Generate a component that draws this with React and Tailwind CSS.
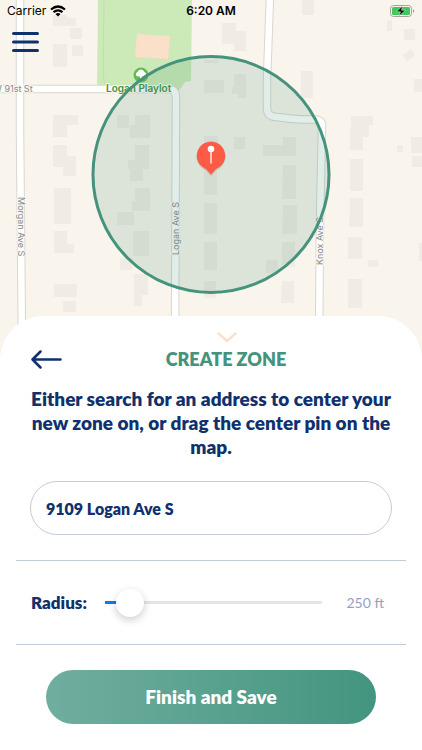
import React, { useState } from 'react';

const MIN_RADIUS = 190;
const MAX_RADIUS = 1230;

const buildings = [
  '53,15h14v3h9v8h-23z', '70,28h12v11h-12z', '53,44h14v23h-14z', '72,45h11v11h-11z',
  '53,115h25v10h-11v12h-14z', '53,145h14v11h9v20h-13v-9h-10z', '54,188h17v36h-17z',
  '54,231h13v13h7v9h-20z', '54,284h23v13h-23z', '63,301h13v11h-13z',
  '117,115h12v13h-12z', '135,115h15v23h-20v-13h5z', '135,145h14v24h-6v12h-13v-12h-2v-9h7z',
  '135,188h15v23h-18v-10h3z', '117,212h17v13h-17z', '133,231h16v25h-16z', '120,258h12v12h-12z',
  '134,274h14v21h-6v11h-8z',
  '204,60h14v3h-14z', '204,80h20v13h-20z', '204,136h14v20h-14z', '204,160h13v35h-13z',
  '204,203h13v31h-13z', '204,242h13v28h-13z', '204,281h12v17h-12z',
  '222,23h14v8h10v20h-12v-7h-12z', '302,0h12v15h-12z', '234,74h12v24h-8v-4h-6v-7h2z',
  '301,71h12v27h-12z', '234,137h11v12h-11z', '283,137h13v19h-33v-11h20z',
  '283,165h13v34h-14z', '283,205h14v29h-15z', '282,242h13v25h-13z', '266,260h12v13h-12z',
  '282,281h12v22h-13z',
  '387,21h5v10h-5z', '404,29h11v11h-11z', '403,55l8,-6l4,6l-8,6z', '414,79h8v13h-8z',
  '351,116h22v9h-4v12h-6v13h-13v-21h1z', '350,159h13v32h-13z', '350,198h13v29h-14z',
  '348,237h14v22h-14z', '368,260h10v7h-10z', '348,279h14v29h-14z',
  '397,145h6v7h-6z', '411,137h11v16h-11z', '412,156h10v11h-10z', '419,243h3v18h-3z',
];

const roads = [
  'M20 -5V130L22 345',
  'M-5 89H168Q176 89 176 97L175 345',
  'M270 -5L267 80V108Q267 117 277 117Q298 120 314 119.500Q322 119 322 126L320 220L319 345',
];

const ZoneMap = () => (
  <svg
    viewBox="0 0 422 364"
    preserveAspectRatio="xMidYMin slice"
    className="block w-full h-[364px]"
    role="img"
    aria-label="Zone map"
  >
    <rect width="422" height="364" fill="#f9f4ec" />
    <path d="M98 0H192L191 81L185 82L178 92H97z" fill="#cbeab8" />
    <path d="M104 0L103 75L105 85" fill="none" stroke="#bfdfad" />
    <path d="M137 34L170 36L168 59L135 57z" fill="#fadfc9" />
    <path d={buildings.map((b) => `M${b}`).join('')} fill="#f0ebe4" />
    <g fill="none" strokeLinejoin="round">
      {roads.map((d) => <path key={d} d={d} stroke="#dad6d0" strokeWidth="8.500" />)}
      {roads.map((d) => <path key={d} d={d} stroke="#ffffff" strokeWidth="6.500" />)}
    </g>

    <circle cx="141" cy="75" r="7.500" fill="#65b951" />
    <path d="M140 80V76.500H138A2.300 2.300 0 0 1 137.500 72A3.700 3.700 0 0 1 144.500 72A2.300 2.300 0 0 1 144 76.500H142V80z" fill="#ffffff" />

    <g
      fontFamily="Inter, sans-serif"
      fontSize="9"
      fill="#858b91"
      stroke="#fbf8f3"
      strokeWidth="2"
      paintOrder="stroke"
    >
      <text x="-7" y="92">W 91st St</text>
      <text transform="translate(18 197) rotate(90)">Morgan Ave S</text>
      <text transform="translate(179 255) rotate(-90)">Logan Ave S</text>
      <text transform="translate(323 265) rotate(-90)">Knox Ave S</text>
      <text x="106" y="92" fontSize="10" fontWeight="600" fill="#439443">Logan Playlot</text>
    </g>

    <circle cx="211" cy="174.500" r="118" fill="#468f78" fillOpacity="0.160" stroke="#45937c" strokeWidth="3" />

    <path d="M211 176L206 170.500A14.500 14.500 0 1 1 216 170.500z" fill="#843c2d" opacity="0.200" />
    <path d="M211 174.500L206 169A14.200 14.200 0 1 1 216 169z" fill="#fd5b46" />
    <circle cx="211" cy="149" r="3.300" fill="#ffffff" />
    <path d="M211 151V163" stroke="#ffffff" strokeWidth="1.300" strokeLinecap="round" />
  </svg>
);

const StatusBar = () => (
  <div className="grid grid-cols-3 items-center h-5 pt-0.5 px-[7px] font-['Inter',sans-serif] text-xs text-black">
    <div className="flex items-center gap-1">
      <span>Carrier</span>
      <svg width="16" height="12" viewBox="0 0 16 12" fill="none" stroke="currentColor" strokeWidth="2.200">
        <path d="M1 4.500Q8 -1.500 15 4.500M3.500 7.200Q8 3.500 12.500 7.200" />
        <path d="M5.500 9Q8 7 10.500 9L8 11.500z" fill="currentColor" stroke="none" />
      </svg>
    </div>
    <span className="text-center font-semibold">6:20 AM</span>
    <svg className="justify-self-end" width="25" height="12" viewBox="0 0 25 12">
      <rect x="0.500" y="0.500" width="21" height="11" rx="3" fill="#f9f4ec" stroke="#a5a39e" />
      <rect x="2" y="2" width="18" height="8" rx="1.500" fill="#3ccb5a" />
      <path d="M23 4Q25 6 23 8z" fill="#8d8b87" />
      <path d="M12.500 1L6.500 6.800H10.500L9 11L15.500 5.200H11.500z" fill="#000000" stroke="#f9f4ec" strokeWidth="0.500" />
    </svg>
  </div>
);

const RadiusSlider = ({ radius, setRadius }) => {
  const filled = ((radius - MIN_RADIUS) / (MAX_RADIUS - MIN_RADIUS)) * 100;

  return (
    <div className="flex items-center px-[15px] h-[83px]">
      <label htmlFor="radius" className="w-[74px] text-[17px] font-extrabold">Radius:</label>
      <input
        id="radius"
        type="range"
        min={MIN_RADIUS}
        max={MAX_RADIUS}
        value={radius}
        onChange={(e) => setRadius(Number(e.target.value))}
        style={{ backgroundImage: `linear-gradient(to right, #0a7cf0 calc(${filled}% + 10px), #e5e5e5 0)` }}
        className="flex-1 min-w-0 h-7 appearance-none bg-transparent bg-[length:100%_3px] bg-center bg-no-repeat [&::-webkit-slider-thumb]:appearance-none [&::-webkit-slider-thumb]:size-7 [&::-webkit-slider-thumb]:rounded-full [&::-webkit-slider-thumb]:bg-white [&::-webkit-slider-thumb]:shadow-[0_3px_8px_rgba(0,0,0,0.2)]"
      />
      <output htmlFor="radius" className="w-[69px] pr-[7px] text-right text-sm text-[#929fbf]">{radius} ft</output>
    </div>
  );
};

const App = () => {
  const [address, setAddress] = useState('9109 Logan Ave S');
  const [radius, setRadius] = useState(250);

  return (
    <div className="min-h-screen flex flex-col bg-white font-['Lato',sans-serif] text-[#10316b]">
      <header className="relative">
        <ZoneMap />
        <div className="absolute inset-x-0 top-0">
          <StatusBar />
          <button aria-label="Menu" className="block mt-3 ml-3">
            <svg width="27" height="21" viewBox="0 0 27 21" stroke="currentColor" strokeWidth="3" strokeLinecap="round">
              <path d="M1.500 1.500H25.500M1.500 10H25.500M1.500 18.500H25.500" />
            </svg>
          </button>
        </div>
      </header>

      <main className="relative flex-1 -mt-12 px-4 pb-6 rounded-t-[44px] bg-white">
        <div className="flex justify-center pt-4 pl-8">
          <svg width="20" height="11" viewBox="0 0 20 11" fill="none" stroke="#fce0cf" strokeWidth="2.500" strokeLinecap="round">
            <path d="M1.500 1.500L10 9L18.500 1.500" />
          </svg>
        </div>

        <div className="grid grid-cols-[30px_1fr_30px] items-center px-[15px] mt-1 h-6">
          <button aria-label="Back">
            <svg width="31" height="19" viewBox="0 0 31 19" fill="none" stroke="currentColor" strokeWidth="2.500" strokeLinecap="round" strokeLinejoin="round">
              <path d="M9.500 1.500L1.500 9.500L9.500 17.500M1.500 9.500H29.500" />
            </svg>
          </button>
          <h1 className="pl-[30px] text-center text-lg leading-6 font-extrabold text-[#45937c]">CREATE ZONE</h1>
        </div>

        <p className="mt-4 text-center text-[19px] leading-6 font-extrabold">
          Either search for an address to center your new zone on, or drag the center pin on the map.
        </p>

        <div className="px-[14px] mt-[22px]">
          <input
            type="text"
            aria-label="Address"
            value={address}
            onChange={(e) => setAddress(e.target.value)}
            className="w-full h-[54px] px-[15px] rounded-full border border-[#c3ccd9] font-extrabold outline-none"
          />
        </div>

        <div className="mt-[25px] border-y border-[#c3ccd9]">
          <RadiusSlider radius={radius} setRadius={setRadius} />
        </div>

        <div className="px-[30px] mt-[25px]">
          <button className="w-full h-[54px] rounded-full bg-linear-to-r from-[#70ae9f] to-[#429580] text-[19px] font-extrabold text-white">
            Finish and Save
          </button>
        </div>
      </main>
    </div>
  );
};

export default App;
